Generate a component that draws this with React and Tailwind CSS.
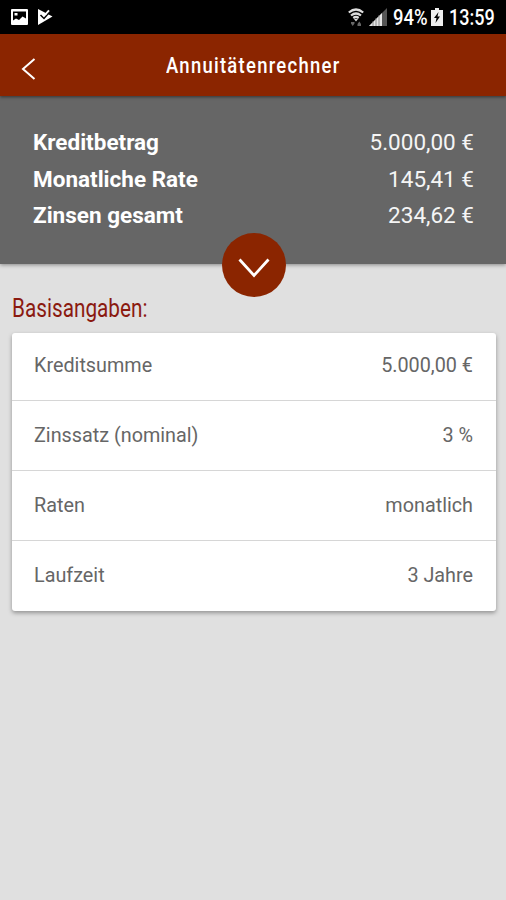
const summary = [
  { label: 'Kreditbetrag', value: '5.000,00 €' },
  { label: 'Monatliche Rate', value: '145,41 €' },
  { label: 'Zinsen gesamt', value: '234,62 €' },
];

const details = [
  { label: 'Kreditsumme', value: '5.000,00 €' },
  { label: 'Zinssatz (nominal)', value: '3 %' },
  { label: 'Raten', value: 'monatlich' },
  { label: 'Laufzeit', value: '3 Jahre' },
];

function StatusBar() {
  return (
    <div className="h-[34px] bg-black text-white flex items-center pl-[11px] pr-[11px]">
      <svg width="17" height="16" viewBox="0 0 17 16">
        <path fill="#fff" fillRule="evenodd" d="M1 0h15a1 1 0 0 1 1 1v14a1 1 0 0 1-1 1H1a1 1 0 0 1-1-1V1a1 1 0 0 1 1-1zM2 2.500v9l3-2 3 1.500 3.500-3.500 3.500 2v-7z" />
        <path fill="#fff" d="M3.500 4h3v2.500h-3z" />
      </svg>
      <svg className="ml-[9px]" width="16" height="16" viewBox="0 0 16 16">
        <path fill="#fff" d="M1 0l14.500 7.500L1 16z" />
        <path fill="none" stroke="#000" strokeWidth="1.500" d="M3.500 6l3.500 3.500L13.500 2" />
        <path fill="none" stroke="#fff" strokeWidth="1.800" d="M8 5.800l4-4.500" />
      </svg>

      <svg className="ml-auto" width="16" height="19" viewBox="0 0 16 19">
        <path fill="none" stroke="#ddd" strokeWidth="2.200" d="M.8 4.500Q8-1.500 15.200 4.500M3 7.500q5-4 10 0M5.300 10q2.700-2 5.400 0" />
        <path fill="#ddd" d="M6 11h4l-2 2.500z" />
        <path fill="#666" d="M3 14h3.500v1.500L4.700 18 3 15.500zM9.500 18v-2l1.800-2.500L13 16v2z" />
      </svg>
      <svg className="ml-[5px]" width="18" height="18" viewBox="0 0 18 18">
        <path fill="#555" d="M18 0v18H0z" />
        <path fill="#e5e5e5" d="M13 5v13H0z" />
        <path stroke="#777" strokeWidth=".8" d="M4 13v5M7 10v8M10 7v11" />
      </svg>
      <span className="ml-[6px] mt-[2px] w-[35px] h-[24px] leading-[24px]">
        <span className="block w-max origin-left scale-x-[0.84] text-[22px] font-medium">94%</span>
      </span>
      <svg className="ml-[3px]" width="12" height="18" viewBox="0 0 12 18">
        <path fill="#eee" d="M4 0h4v2h4v16H0V2h4z" />
        <path fill="#000" d="M7.500 4L3 10h2.500L4.500 15 9 8.500H6.500z" />
      </svg>
      <span className="ml-[6px] mt-[2px] w-[46px] h-[24px] leading-[24px]">
        <span className="block w-max origin-left scale-x-[0.82] text-[22px] font-medium">13:59</span>
      </span>
    </div>
  );
}

export default function App() {
  return (
    <div className="w-[506px] h-[900px] overflow-hidden bg-[#e0e0e0] font-['Roboto',sans-serif]">
      <StatusBar />

      <header className="relative z-10 h-[62px] bg-[#8b2500] text-white flex items-center shadow-[0_1px_3px_rgba(0,0,0,0.5)]">
        <svg className="ml-[21px] mt-[8px]" width="15" height="24" viewBox="0 0 15 24">
          <path fill="none" stroke="#fff" strokeWidth="2" d="M13.500 2L2 12l11.500 10" />
        </svg>
        <h1 className="ml-[130px] w-max origin-left scale-x-[0.84] text-[22px] font-medium tracking-[1.500px]">Annuitätenrechner</h1>
      </header>

      <section className="relative h-[168px] bg-[#666] text-white pl-[33px] pr-[32px] pt-[28px] shadow-[0_1px_4px_rgba(0,0,0,0.4)]">
        {summary.map((row) => (
          <div key={row.label} className="flex justify-between h-[36.500px] leading-[36.500px] text-[22.500px]">
            <span className="font-bold">{row.label}</span>
            <span className="text-[#f5f5f5]">{row.value}</span>
          </div>
        ))}
        <button className="absolute left-[222px] -bottom-[33px] size-[64px] rounded-full bg-[#8b2500] flex items-center justify-center">
          <svg className="mt-[6px]" width="32" height="20" viewBox="0 0 32 20">
            <path fill="none" stroke="#fff" strokeWidth="2.800" d="M1.500 1.500L16 17.500l14.500-16" />
          </svg>
        </button>
      </section>

      <main className="pl-[12px] pr-[10px] pt-[29px]">
        <h2 className="w-max h-[32px] leading-[32px] origin-left scale-x-[0.83] text-[25px] text-[#8b1a10]">Basisangaben:</h2>
        <div className="mt-[8px] bg-white rounded-[3px] shadow-[0_2px_4px_rgba(0,0,0,0.35)] text-[#666]">
          {details.map((row) => (
            <div key={row.label} className="flex justify-between items-center h-[70px] first:h-[68px] first:pb-[2px] border-b last:border-b-0 border-[#d6d6d6] pl-[22px] pr-[23px] text-[19.800px]">
              <span>{row.label}</span>
              <span>{row.value}</span>
            </div>
          ))}
        </div>
      </main>
    </div>
  );
}
